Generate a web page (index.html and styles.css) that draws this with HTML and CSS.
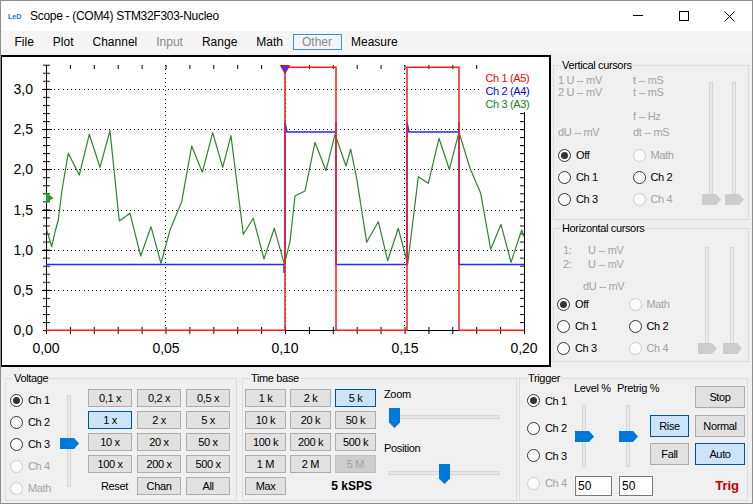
FILE: index.html
```html
<!DOCTYPE html>
<html>
<head>
<meta charset="utf-8">
<title>Scope</title>
<link rel="stylesheet" href="styles.css">
</head>
<body>
<div class="window">
  <div class="titlebar">
    <span class="appicon">LeD</span>
    <span class="title">Scope - (COM4) STM32F303-Nucleo</span>
    <div class="winbtns">
      <div class="winbtn"><svg width="10" height="10" viewBox="0 0 10 10"><path d="M0 4.5H10" stroke="#000" stroke-width="1"/></svg></div>
      <div class="winbtn"><svg width="10" height="10" viewBox="0 0 10 10"><rect x="0.5" y="0.5" width="9" height="9" fill="none" stroke="#000" stroke-width="1"/></svg></div>
      <div class="winbtn close"><svg width="11" height="11" viewBox="0 0 11 11"><path d="M0.5 0.5L10.5 10.5M10.5 0.5L0.5 10.5" stroke="#000" stroke-width="1"/></svg></div>
    </div>
  </div>

  <div class="menubar">
    <span class="mi">File</span>
    <span class="mi">Plot</span>
    <span class="mi">Channel</span>
    <span class="mi dis">Input</span>
    <span class="mi">Range</span>
    <span class="mi">Math</span>
    <span class="mi dis sel">Other</span>
    <span class="mi">Measure</span>
  </div>

  <div class="main">
    <div class="plot">
      <svg viewBox="2 57 547 308" width="547" height="308">
        <defs>
          <pattern id="ytick" patternUnits="userSpaceOnUse" x="0" y="330" width="40" height="8.04">
            <rect width="40" height="1" fill="#000"/>
          </pattern>
          <pattern id="xtick" patternUnits="userSpaceOnUse" x="46" y="0" width="23.9" height="40">
            <rect width="1" height="40" fill="#000"/>
          </pattern>
        </defs>
        <g class="grid">
          <path d="M50 89.5H524M50 129.5H524M50 169.5H524M50 210.5H524M50 250.5H524M50 290.5H524"/>
          <path d="M165.5 65V330M285.5 65V330M404.5 65V330"/>
        </g>
        <g shape-rendering="crispEdges">
          <rect x="43" y="64" width="7" height="268" fill="url(#ytick)"/>
          <rect x="520" y="64" width="5" height="268" fill="url(#ytick)"/>
          <rect x="46" y="327" width="479" height="7" fill="url(#xtick)"/>
          <rect x="46" y="65" width="479" height="4" fill="url(#xtick)"/>
          <path d="M46.5 65V331M524.5 65V331M46 330.5H525M42 89.5H52M42 129.5H52M42 169.5H52M42 210.5H52M42 250.5H52M42 290.5H52" stroke="#000" stroke-width="1" fill="none"/>
        </g>
        <g class="ylab">
          <text x="33" y="94">3,0</text>
          <text x="33" y="134">2,5</text>
          <text x="33" y="174">2,0</text>
          <text x="33" y="215">1,5</text>
          <text x="33" y="255">1,0</text>
          <text x="33" y="295">0,5</text>
          <text x="33" y="335">0,0</text>
        </g>
        <g class="xlab">
          <text x="46" y="353">0,00</text>
          <text x="166" y="353">0,05</text>
          <text x="285" y="353">0,10</text>
          <text x="405" y="353">0,15</text>
          <text x="524" y="353">0,20</text>
        </g>
        <path class="ch2" d="M46 264.5H284V273M285 264V122.5L287 132H336V122V264.5H407V122.5L409 132H459V122V264.5H524"/>
        <polyline class="ch3" points="46.7,230 51.7,246.7 55,232 58.3,220 62,190 68.3,153.3 79.3,175 89.3,134.3 100,167.3 110,130.7 119.3,221 130,213.3 140.7,256 151,226.7 161,263.3 170,230 181.7,201.7 191.7,146 202.3,172.3 212.7,132.7 222.7,167.3 231,135.7 243.3,234.3 253.3,218.3 264,259 274.3,228.3 284.3,264 290,241.7 295,196 305,191 315,142.3 326,170.7 335,134.3 346,166 350.7,149 356.7,178.3 366.7,242.3 378.3,221.7 387.7,260.7 398.3,228.3 407.7,264 418.3,176.7 428.3,183.3 439,138.3 449.3,169.3 459,132.3 470,168.3 480.7,193.3 490.7,249.3 501,224.3 511,262.3 521.7,230 524,236.7"/>
        <path class="ch1" d="M46 330.3H285V67.3H336V330.3H407V67.3H459V330.3H524"/>
        <polygon points="46,192.5 53.5,198 46,203.5" fill="#2f9a2f"/>
        <polygon points="280.5,65.5 289.5,65.5 285,73.5" fill="#3a3aff" stroke="#ff0000" stroke-width="1"/>
        <rect x="483" y="64" width="48" height="48" fill="#fff"/>
        <g class="legend">
          <text x="485.5" y="82.3" fill="#ff0000">Ch 1 (A5)</text>
          <text x="485.5" y="95.2" fill="#0000ff">Ch 2 (A4)</text>
          <text x="485.5" y="108.3" fill="#138413">Ch 3 (A3)</text>
        </g>
      </svg>
    </div>

    <div class="side">
      <div class="group vcur">
        <span class="gtitle">Vertical cursors</span>
        <div class="cleft">
          <div class="vinfo">
            <span>1 U -- mV</span><span>t -- mS</span>
            <span>2 U -- mV</span><span>t -- mS</span>
            <span></span><span>f -- Hz</span>
            <span>dU -- mV</span><span>dt -- mS</span>
          </div>
          <div class="rgrid vr">
            <label class="radio"><span class="rb on"></span>Off</label>
            <label class="radio dis"><span class="rb"></span>Math</label>
            <label class="radio"><span class="rb"></span>Ch 1</label>
            <label class="radio"><span class="rb"></span>Ch 2</label>
            <label class="radio"><span class="rb"></span>Ch 3</label>
            <label class="radio dis"><span class="rb"></span>Ch 4</label>
          </div>
        </div>
        <div class="csliders vcs">
          <div class="vslider"><span class="track"></span><svg class="thumb off" style="top:112px" viewBox="0 0 19 11"><path d="M0 0H14L19 5.5L14 11H0Z"/></svg></div>
          <div class="vslider"><span class="track"></span><svg class="thumb off" style="top:112px" viewBox="0 0 19 11"><path d="M0 0H14L19 5.5L14 11H0Z"/></svg></div>
        </div>
      </div>

      <div class="group hcur">
        <span class="gtitle">Horizontal cursors</span>
        <div class="cleft">
          <div class="hinfo">
            <div class="hrow r1"><span class="hn">1:</span><span>U -- mV</span></div>
            <div class="hrow r2"><span class="hn">2:</span><span>U -- mV</span></div>
            <div class="hrow r3">dU -- mV</div>
          </div>
          <div class="rgrid hr">
            <label class="radio"><span class="rb on"></span>Off</label>
            <label class="radio dis"><span class="rb"></span>Math</label>
            <label class="radio"><span class="rb"></span>Ch 1</label>
            <label class="radio"><span class="rb"></span>Ch 2</label>
            <label class="radio"><span class="rb"></span>Ch 3</label>
            <label class="radio dis"><span class="rb"></span>Ch 4</label>
          </div>
        </div>
        <div class="csliders hcs">
          <div class="vslider"><span class="track"></span><svg class="thumb off" style="top:96px" viewBox="0 0 19 11"><path d="M0 0H14L19 5.5L14 11H0Z"/></svg></div>
          <div class="vslider"><span class="track"></span><svg class="thumb off" style="top:96px" viewBox="0 0 19 11"><path d="M0 0H14L19 5.5L14 11H0Z"/></svg></div>
        </div>
      </div>
    </div>
  </div>

  <div class="bottom">
    <div class="group volt">
      <span class="gtitle">Voltage</span>
      <div class="rcol">
        <label class="radio"><span class="rb on"></span>Ch 1</label>
        <label class="radio"><span class="rb"></span>Ch 2</label>
        <label class="radio"><span class="rb"></span>Ch 3</label>
        <label class="radio dis"><span class="rb"></span>Ch 4</label>
        <label class="radio dis"><span class="rb"></span>Math</label>
      </div>
      <div class="vslider volts"><span class="track"></span><svg class="thumb" style="top:43px" viewBox="0 0 19 11"><path d="M0 0H14L19 5.5L14 11H0Z"/></svg></div>
      <div class="btngrid vgrid">
        <span class="btn">0,1 x</span><span class="btn">0,2 x</span><span class="btn">0,5 x</span>
        <span class="btn on">1 x</span><span class="btn">2 x</span><span class="btn">5 x</span>
        <span class="btn">10 x</span><span class="btn">20 x</span><span class="btn">50 x</span>
        <span class="btn">100 x</span><span class="btn">200 x</span><span class="btn">500 x</span>
        <span class="plain reset">Reset</span><span class="btn">Chan</span><span class="btn">All</span>
      </div>
    </div>

    <div class="group tbase">
      <span class="gtitle">Time base</span>
      <div class="btngrid tgrid">
        <span class="btn">1 k</span><span class="btn">2 k</span><span class="btn on">5 k</span>
        <span class="btn">10 k</span><span class="btn">20 k</span><span class="btn">50 k</span>
        <span class="btn">100 k</span><span class="btn">200 k</span><span class="btn">500 k</span>
        <span class="btn">1 M</span><span class="btn">2 M</span><span class="btn dis">5 M</span>
        <span class="btn">Max</span><span class="sps">5 kSPS</span>
      </div>
      <div class="tbright">
        <span class="lbl zl">Zoom</span>
        <div class="hslider zs"><span class="track"></span><svg class="hthumb" style="left:0px" viewBox="0 0 11 20"><path d="M0 0H11V14.5L5.5 20L0 14.5Z"/></svg></div>
        <span class="lbl pl">Position</span>
        <div class="hslider ps"><span class="track"></span><svg class="hthumb" style="left:50px" viewBox="0 0 11 20"><path d="M0 0H11V14.5L5.5 20L0 14.5Z"/></svg></div>
      </div>
    </div>

    <div class="group trig">
      <span class="gtitle">Trigger</span>
      <div class="trcol">
        <label class="radio"><span class="rb on"></span>Ch 1</label>
        <label class="radio"><span class="rb"></span>Ch 2</label>
        <label class="radio"><span class="rb"></span>Ch 3</label>
        <label class="radio dis"><span class="rb"></span>Ch 4</label>
      </div>
      <div class="trmid">
        <div class="trlabels"><span class="lv">Level %</span><span class="pt">Pretrig %</span></div>
        <div class="trsliders">
          <div class="vslider tl"><span class="track"></span><svg class="thumb" style="top:26px" viewBox="0 0 19 11"><path d="M0 0H14L19 5.5L14 11H0Z"/></svg></div>
          <div class="vslider tp"><span class="track"></span><svg class="thumb" style="top:26px" viewBox="0 0 19 11"><path d="M0 0H14L19 5.5L14 11H0Z"/></svg></div>
        </div>
        <div class="trinputs">
          <span class="num n1">50</span>
          <span class="num n2">50</span>
        </div>
      </div>
      <div class="trbtns">
        <span class="btn stop">Stop</span>
        <span class="btn on">Rise</span><span class="btn">Normal</span>
        <span class="btn">Fall</span><span class="btn on">Auto</span>
        <span class="trigtxt">Trig</span>
      </div>
    </div>
  </div>
</div>
</body>
</html>
```

FILE: styles.css
```css
* { box-sizing: border-box; }

body {
  margin: 0;
  font-family: "Liberation Sans", Arial, sans-serif;
  color: #000;
}

.window {
  width: 753px;
  height: 504px;
  border: 1px solid #8e8e8e;
  background: #f0f0f0;
  display: flex;
  flex-direction: column;
  overflow: hidden;
}

/* Title bar */
.titlebar {
  flex: none;
  height: 30px;
  background: #fff;
  display: flex;
  align-items: center;
  font-size: 12px;
}
.appicon {
  margin-left: 7px;
  width: 16px;
  font-size: 7px;
  font-weight: bold;
  color: #1b6ac9;
  letter-spacing: 0;
}
.title {
  margin-left: 6px;
  letter-spacing: -0.3px;
}
.winbtns {
  margin-left: auto;
  display: flex;
  height: 100%;
}
.winbtn {
  width: 46px;
  display: flex;
  align-items: center;
  justify-content: center;
}
.winbtn.close { width: 45px; }

/* Menu bar */
.menubar {
  flex: none;
  height: 24px;
  background: #f5f5f5;
  display: flex;
  align-items: flex-start;
  padding: 3px 0 0 4px;
  font-size: 12px;
}
.mi {
  height: 16px;
  line-height: 14px;
  padding: 0 8.5px;
  border: 1px solid transparent;
}
.mi.dis { color: #8a8a8a; }
.mi.sel { border-color: #3d8ee0; }

/* Main */
.main {
  flex: none;
  height: 312px;
  display: flex;
}
.plot {
  width: 550px;
  background: #fff;
  border-style: solid;
  border-color: #000;
  border-width: 2px 2px 2px 1px;
}
.plot svg { display: block; }
.grid path {
  stroke: #000;
  stroke-width: 1;
  stroke-dasharray: 1 3.2;
  fill: none;
  shape-rendering: crispEdges;
}
.ylab text, .xlab text {
  font-family: "Liberation Sans", Arial, sans-serif;
  font-size: 14px;
  fill: #000;
}
.ylab text { text-anchor: end; }
.xlab text { text-anchor: middle; }
.ch1 { fill: none; stroke: #ff1a1a; stroke-width: 1.5; }
.ch2 { fill: none; stroke: #2a2aff; stroke-width: 1.5; }
.ch3 { fill: none; stroke: #2f842f; stroke-width: 1.2; stroke-linejoin: round; }
.legend text {
  font-family: "Liberation Sans", Arial, sans-serif;
  font-size: 11px;
  letter-spacing: -0.35px;
}

.side {
  flex: 1;
  padding: 10px 3px 0 2px;
  display: flex;
  flex-direction: column;
  gap: 8px;
}

/* Group boxes */
.group {
  position: relative;
  border: 1px solid #dcdcdc;
  font-size: 11px;
  letter-spacing: -0.35px;
  display: flex;
  align-items: flex-start;
}
.gtitle {
  position: absolute;
  top: -8px;
  left: 7px;
  padding: 0 1px;
  line-height: 14px;
  background: #f0f0f0;
  white-space: nowrap;
}

/* Cursor groups */
.vcur {
  height: 155px;
  padding: 8px 0 0 4px;
}
.hcur {
  height: 134px;
  padding: 15px 0 0 3px;
}
.cleft { flex: 1; }
.vinfo {
  display: grid;
  grid-template-columns: 75px auto;
  grid-template-rows: 12px 24px 16px 12px;
  line-height: 12px;
  color: #a3a3a3;
}
.hinfo {
  color: #a3a3a3;
  line-height: 12px;
  padding-left: 6px;
}
.hrow { display: flex; }
.hrow.r1 { height: 14px; }
.hrow.r2 { height: 22px; }
.hrow.r3 { height: 12px; padding-left: 20px; }
.hn { width: 25px; }

.rgrid {
  display: grid;
  grid-auto-rows: 22px;
}
.rgrid.vr { grid-template-columns: 74.5px auto; margin-top: 6px; }
.rgrid.hr { grid-template-columns: 71.5px auto; margin-top: 1px; }

.csliders { display: flex; }
.vcs { margin-top: 8px; margin-right: 4px; gap: 4px; }
.vcs .vslider { height: 123px; }
.hcs { margin-top: 3px; margin-right: 6px; gap: 6px; }
.hcs .vslider { height: 106px; }

/* Radio */
.radio {
  display: flex;
  align-items: center;
  gap: 5px;
  height: 22px;
  white-space: nowrap;
}
.rb {
  flex: none;
  position: relative;
  width: 13px;
  height: 13px;
  border-radius: 50%;
  border: 1px solid #333;
  background: #fff;
}
.rb.on::after {
  content: "";
  position: absolute;
  left: 2px;
  top: 2px;
  width: 7px;
  height: 7px;
  border-radius: 50%;
  background: #333;
}
.radio.dis { color: #a3a3a3; }
.radio.dis .rb { border-color: #cccccc; background: #fcfcfc; }

/* Sliders */
.vslider {
  position: relative;
  width: 19px;
  flex: none;
}
.vslider .track {
  position: absolute;
  left: 7px;
  top: 0;
  bottom: 5px;
  width: 4px;
  background: #e7eaea;
  border: 1px solid #d6d6d6;
}
.thumb {
  position: absolute;
  left: 0;
  width: 19px;
  height: 11px;
  fill: #0078d7;
}
.thumb.off { fill: #cccccc; }
.hslider {
  position: relative;
  width: 110px;
  height: 20px;
}
.hslider .track {
  position: absolute;
  left: 0;
  right: 0;
  top: 7px;
  height: 4px;
  background: #e7eaea;
  border: 1px solid #d6d6d6;
}
.hthumb {
  position: absolute;
  top: 0;
  width: 11px;
  height: 20px;
  fill: #0078d7;
}

/* Bottom */
.bottom {
  flex: 1;
  display: flex;
  align-items: flex-start;
  padding: 11px 0 0 4px;
}
.volt {
  width: 232px;
  height: 123px;
  padding: 10px 0 0 4px;
}
.tbase {
  width: 275px;
  height: 123px;
  margin-left: 5px;
  padding: 10px 0 0 2px;
}
.trig {
  width: 229px;
  height: 123px;
  margin-left: 2px;
  padding: 0 0 0 7px;
}

.rcol { width: 50px; flex: none; }
.volts { margin-top: 6px; height: 97px; }

.btngrid {
  display: grid;
  grid-auto-rows: 18px;
  row-gap: 4px;
  flex: none;
}
.vgrid {
  margin-left: 9px;
  grid-template-columns: repeat(3, 44px);
  column-gap: 5px;
}
.tgrid {
  grid-template-columns: repeat(3, 41px);
  column-gap: 4px;
}
.btn {
  display: flex;
  align-items: center;
  justify-content: center;
  background: #e1e1e1;
  border: 1px solid #adadad;
  white-space: nowrap;
}
.btn.on {
  background: #cce4f7;
  border-color: #005499;
}
.btn.dis {
  background: #cccccc;
  border-color: #bfbfbf;
  color: #a3a3a3;
}
.plain {
  display: flex;
  align-items: center;
}
.reset { justify-self: end; margin-right: 4px; }
.sps {
  grid-column: 2 / 4;
  justify-self: end;
  margin-right: 4px;
  display: flex;
  align-items: center;
  font-size: 12px;
  font-weight: bold;
  letter-spacing: 0;
}

.tbright {
  margin-left: 8px;
  display: flex;
  flex-direction: column;
}
.lbl { line-height: 14px; height: 14px; }
.zl { margin-top: -2px; }
.zs { margin-top: 7px; margin-left: 5px; }
.pl { margin-top: 13px; }
.ps { margin-top: 9px; margin-left: 5px; }

/* Trigger */
.trcol {
  width: 47px;
  flex: none;
  padding-top: 8px;
}
.trcol .radio { height: 27.5px; }
.trmid {
  width: 76px;
  flex: none;
}
.trlabels {
  display: flex;
  margin-top: 2px;
  line-height: 14px;
  height: 14px;
  white-space: nowrap;
}
.lv { width: 43px; flex: none; }
.pt { flex: none; }
.trsliders {
  display: flex;
  margin-top: 10px;
  height: 62px;
}
.trsliders .vslider { height: 62px; }
.trsliders .vslider .track { bottom: 0; }
.tl { margin-left: 1px; }
.tp { margin-left: 25px; }
.trinputs {
  display: flex;
  margin-top: 9px;
}
.num {
  flex: none;
  height: 20px;
  line-height: 18px;
  background: #fff;
  border: 1px solid #7a7a7a;
  padding-left: 2px;
  font-size: 12px;
  letter-spacing: 0;
}
.n1 { width: 37px; margin-left: 1px; }
.n2 { width: 34px; margin-left: 7px; }

.trbtns {
  flex: none;
  margin-top: 7px;
  display: grid;
  grid-template-columns: 39px 50px;
  grid-template-rows: 22px 22px 22px auto;
  column-gap: 6px;
  row-gap: 6.5px;
}
.stop { grid-column: 2; }
.trigtxt {
  grid-column: 2;
  justify-self: end;
  margin-right: 6px;
  margin-top: 6px;
  line-height: 16px;
  font-size: 13px;
  font-weight: bold;
  letter-spacing: 0;
  color: #c00000;
}
```
